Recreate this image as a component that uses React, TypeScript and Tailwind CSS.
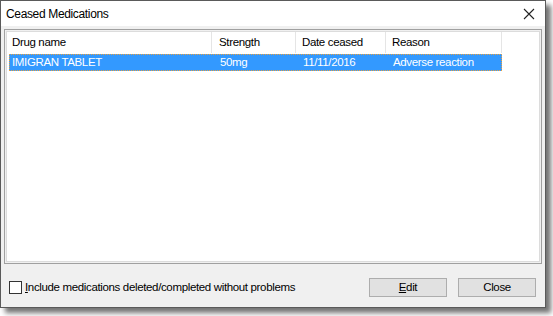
export default function App() {
  return (
    <div className="h-[316px] w-[553px] bg-white">
      <div
        className="flex h-[308px] w-[546px] flex-col border border-[#5a5a5a] bg-[#f0f0f0] text-[11.5px] tracking-[-0.35px] shadow-[5px_5px_5px_rgba(0,0,0,0.55)]"
        style={{ fontFamily: '"Liberation Sans", Arial, sans-serif' }}
      >
        {/* Title bar */}
        <div className="flex h-[25px] items-center justify-between bg-white pl-[5px] pr-[10px]">
          <span className="text-[12px] text-black">Ceased Medications</span>
          <svg width="12" height="12" viewBox="0 0 12 12" className="mt-[1px]">
            <path d="M1 1 L11 11 M11 1 L1 11" stroke="#222" strokeWidth="1.1" />
          </svg>
        </div>

        {/* List */}
        <div className="mx-[3px] mt-[3px] h-[235px] border border-[#a0a0a0] p-[1px]">
          <div className="h-full border border-[#dcdcdc] bg-white">
            <div className="flex h-[21px] text-black">
              <HeaderCell w="w-[205px]" pl="pl-[5px]">Drug name</HeaderCell>
              <HeaderCell w="w-[84px]" pl="pl-[7px]">Strength</HeaderCell>
              <HeaderCell w="w-[90px]" pl="pl-[6px]">Date ceased</HeaderCell>
              <HeaderCell w="w-[116px]" pl="pl-[6px]">Reason</HeaderCell>
            </div>
            <div className="ml-[2px] mt-[1px] flex h-[17px] w-[493px] items-center border border-dotted border-[#e8a040] bg-[#3399ff] text-white">
              <span className="w-[203px] pl-[2px]">IMIGRAN TABLET</span>
              <span className="w-[84px] pl-[7px]">50mg</span>
              <span className="w-[90px] pl-[6px]">11/11/2016</span>
              <span className="pl-[6px]">Adverse reaction</span>
            </div>
          </div>
        </div>

        {/* Footer */}
        <div className="flex flex-1 items-start justify-between pl-[8px] pr-[9px] pt-[14px]">
          <label className="mt-[1px] flex items-center gap-[3px] text-black">
            <span className="h-[13px] w-[13px] border border-[#333] bg-white" />
            <span>
              <span className="underline">I</span>nclude medications deleted/completed without problems
            </span>
          </label>
          <div className="flex gap-[11px]">
            <button className="h-[19px] w-[78px] border border-[#adadad] bg-[#e1e1e1] text-black">
              <span className="underline">E</span>dit
            </button>
            <button className="h-[19px] w-[78px] border border-[#adadad] bg-[#e1e1e1] text-black">
              Close
            </button>
          </div>
        </div>
      </div>
    </div>
  );
}

function HeaderCell({ w, pl, children }: { w: string; pl: string; children: React.ReactNode }) {
  return (
    <div className={`${w} ${pl} flex items-center border-r border-[#e5e5e5]`}>
      {children}
    </div>
  );
}
